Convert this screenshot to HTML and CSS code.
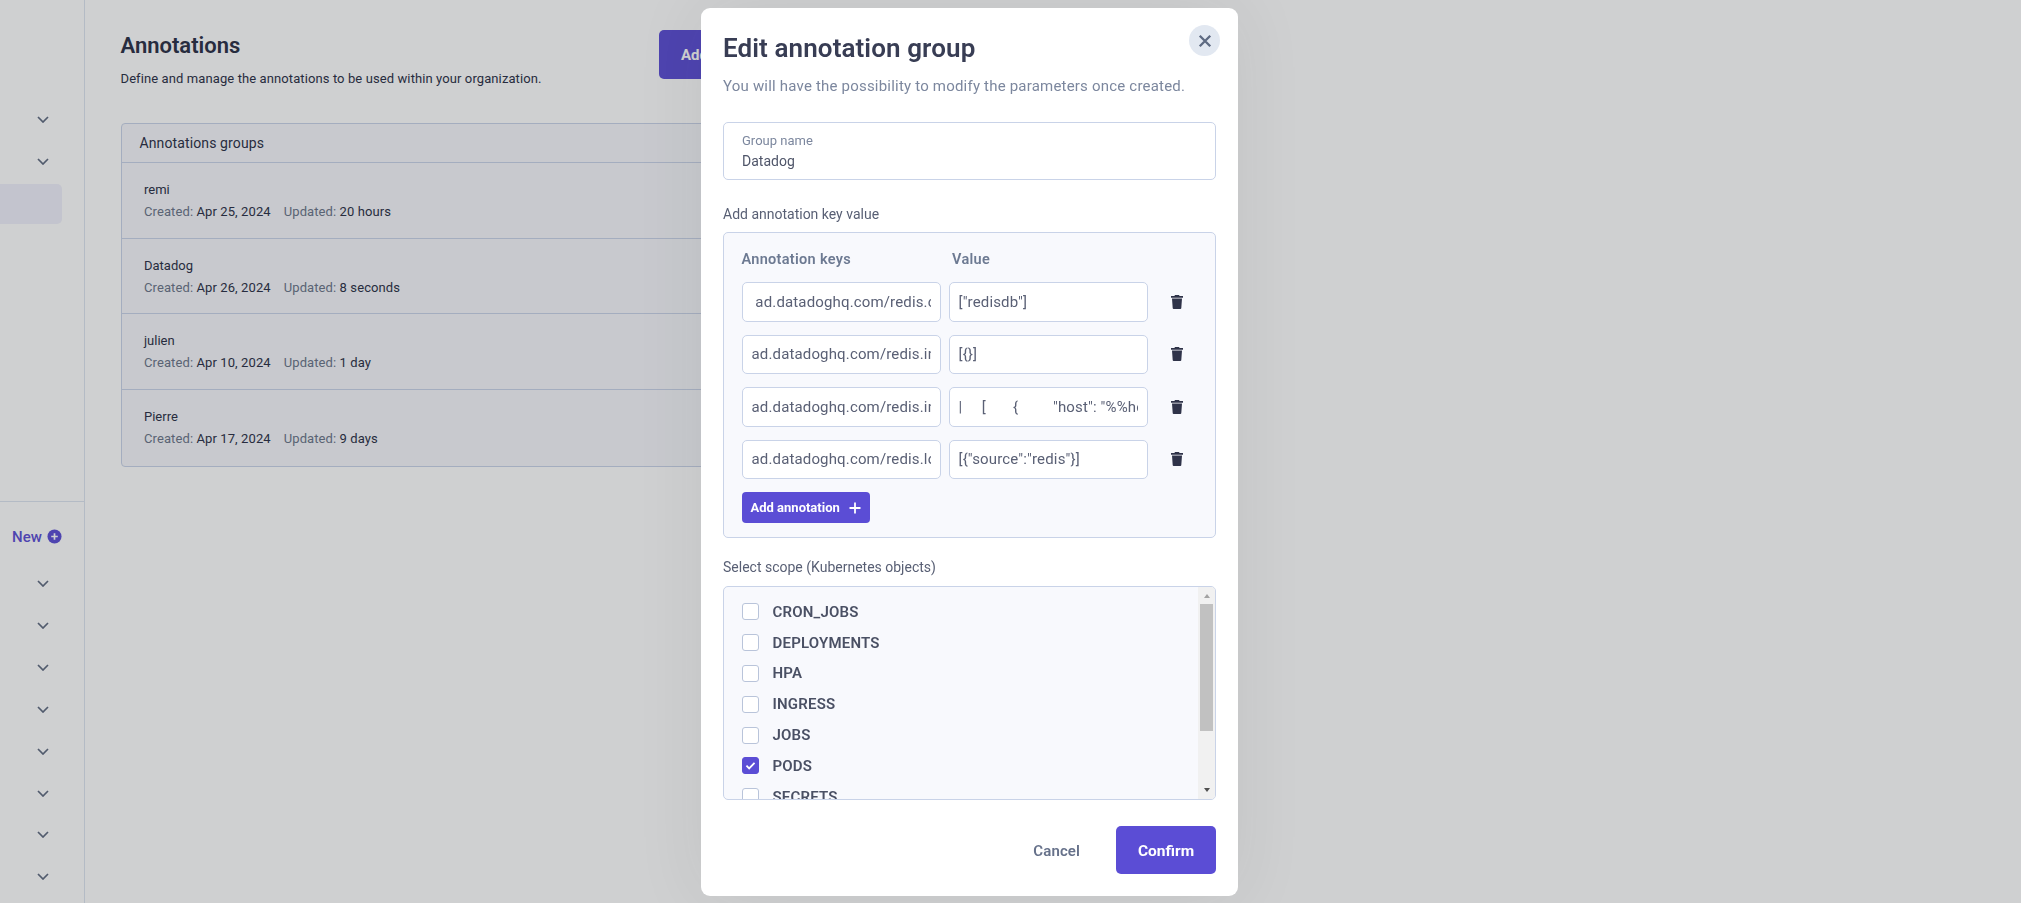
FILE: index.html
```html
<!DOCTYPE html>
<html lang="en">
<head>
    <meta charset="UTF-8">
    <title>Annotations</title>
    <link rel="stylesheet" href="styles.css">
</head>
<body>
    <div class="page">
        <aside class="sidebar">
            <div class="side-top">
                <div class="side-row"><svg class="chev" viewBox="0 0 12 7"><path d="M1 1l5 5 5-5"/></svg></div>
                <div class="side-row"><svg class="chev" viewBox="0 0 12 7"><path d="M1 1l5 5 5-5"/></svg></div>
                <div class="side-active"></div>
            </div>
            <div class="side-new">
                <span>New</span>
                <svg class="new-icon" viewBox="0 0 16 16"><circle cx="8" cy="8" r="7.5"/><path d="M8 4.5v7M4.5 8h7"/></svg>
            </div>
            <div class="side-row"><svg class="chev" viewBox="0 0 12 7"><path d="M1 1l5 5 5-5"/></svg></div>
            <div class="side-row"><svg class="chev" viewBox="0 0 12 7"><path d="M1 1l5 5 5-5"/></svg></div>
            <div class="side-row"><svg class="chev" viewBox="0 0 12 7"><path d="M1 1l5 5 5-5"/></svg></div>
            <div class="side-row"><svg class="chev" viewBox="0 0 12 7"><path d="M1 1l5 5 5-5"/></svg></div>
            <div class="side-row"><svg class="chev" viewBox="0 0 12 7"><path d="M1 1l5 5 5-5"/></svg></div>
            <div class="side-row"><svg class="chev" viewBox="0 0 12 7"><path d="M1 1l5 5 5-5"/></svg></div>
            <div class="side-row"><svg class="chev" viewBox="0 0 12 7"><path d="M1 1l5 5 5-5"/></svg></div>
            <div class="side-row"><svg class="chev" viewBox="0 0 12 7"><path d="M1 1l5 5 5-5"/></svg></div>
        </aside>

        <main class="content">
            <div class="content-head">
                <div>
                    <h1>Annotations</h1>
                    <p>Define and manage the annotations to be used within your organization.</p>
                </div>
                <button class="add-group">Add annotation group</button>
            </div>
            <section class="groups">
                <div class="groups-title">Annotations groups</div>
                <div class="group-row">
                    <div class="group-name">remi</div>
                    <div class="group-meta"><span>Created: <b>Apr 25, 2024</b></span><span>Updated: <b>20 hours</b></span></div>
                </div>
                <div class="group-row">
                    <div class="group-name">Datadog</div>
                    <div class="group-meta"><span>Created: <b>Apr 26, 2024</b></span><span>Updated: <b>8 seconds</b></span></div>
                </div>
                <div class="group-row">
                    <div class="group-name">julien</div>
                    <div class="group-meta"><span>Created: <b>Apr 10, 2024</b></span><span>Updated: <b>1 day</b></span></div>
                </div>
                <div class="group-row">
                    <div class="group-name">Pierre</div>
                    <div class="group-meta"><span>Created: <b>Apr 17, 2024</b></span><span>Updated: <b>9 days</b></span></div>
                </div>
            </section>
        </main>
    </div>

    <div class="overlay">
        <div class="modal">
            <button class="close" aria-label="Close"><svg viewBox="0 0 12 12"><path d="M1.5 1.5l9 9M10.5 1.5l-9 9"/></svg></button>
            <h2>Edit annotation group</h2>
            <p class="modal-sub">You will have the possibility to modify the parameters once created.</p>

            <label class="name-field">
                <span>Group name</span>
                <input type="text" value="Datadog">
            </label>

            <div class="field-label kv-label">Add annotation key value</div>
            <div class="kv-panel">
                <div class="kv-head">
                    <span class="kv-key-head">Annotation keys</span>
                    <span class="kv-val-head">Value</span>
                </div>
                <div class="kv-row">
                    <input class="kv-input" type="text" value=" ad.datadoghq.com/redis.checks">
                    <input class="kv-input" type="text" value='["redisdb"]'>
                    <svg class="trash" viewBox="0 0 12 14"><path d="M4 0h4l.6 1H12v1.7H0V1h3.4zM1 3.6h10l-.7 9.4a1 1 0 0 1-1 1H2.7a1 1 0 0 1-1-1z"/></svg>
                </div>
                <div class="kv-row">
                    <input class="kv-input" type="text" value="ad.datadoghq.com/redis.init_configs">
                    <input class="kv-input" type="text" value="[{}]">
                    <svg class="trash" viewBox="0 0 12 14"><path d="M4 0h4l.6 1H12v1.7H0V1h3.4zM1 3.6h10l-.7 9.4a1 1 0 0 1-1 1H2.7a1 1 0 0 1-1-1z"/></svg>
                </div>
                <div class="kv-row">
                    <input class="kv-input" type="text" value="ad.datadoghq.com/redis.instances">
                    <input class="kv-input" type="text" value='|     [       {         "host": "%%host%%"'>
                    <svg class="trash" viewBox="0 0 12 14"><path d="M4 0h4l.6 1H12v1.7H0V1h3.4zM1 3.6h10l-.7 9.4a1 1 0 0 1-1 1H2.7a1 1 0 0 1-1-1z"/></svg>
                </div>
                <div class="kv-row">
                    <input class="kv-input" type="text" value="ad.datadoghq.com/redis.logs">
                    <input class="kv-input" type="text" value='[{"source":"redis"}]'>
                    <svg class="trash" viewBox="0 0 12 14"><path d="M4 0h4l.6 1H12v1.7H0V1h3.4zM1 3.6h10l-.7 9.4a1 1 0 0 1-1 1H2.7a1 1 0 0 1-1-1z"/></svg>
                </div>
                <button class="add-annotation">Add annotation <svg viewBox="0 0 12 12"><path d="M6 .5v11M.5 6h11"/></svg></button>
            </div>

            <div class="field-label scope-label">Select scope (Kubernetes objects)</div>
            <div class="scope-box">
                <div class="scope-list">
                    <div class="scope-row"><span class="check"></span>CRON_JOBS</div>
                    <div class="scope-row"><span class="check"></span>DEPLOYMENTS</div>
                    <div class="scope-row"><span class="check"></span>HPA</div>
                    <div class="scope-row"><span class="check"></span>INGRESS</div>
                    <div class="scope-row"><span class="check"></span>JOBS</div>
                    <div class="scope-row"><span class="check checked"><svg viewBox="0 0 12 10"><path d="M1.5 5.2l3 3 6-6.2"/></svg></span>PODS</div>
                    <div class="scope-row"><span class="check"></span>SECRETS</div>
                </div>
                <div class="scrollbar">
                    <span class="arrow-up"></span>
                    <span class="thumb"></span>
                    <span class="arrow-down"></span>
                </div>
            </div>

            <div class="modal-foot">
                <button class="cancel">Cancel</button>
                <button class="confirm">Confirm</button>
            </div>
        </div>
    </div>
</body>
</html>
```

FILE: styles.css
```css
* {
    box-sizing: border-box;
}

html,
body {
    height: 100%;
}

body {
    margin: 0;
    overflow: hidden;
    background-color: #fff;
    color: #2a2e45;
    font-family: Roboto, "Open Sans", sans-serif;
    font-size: 14px;
}

button {
    font-family: inherit;
    border: 0;
    cursor: pointer;
}

.page {
    display: flex;
    height: 100%;
}

/* sidebar */
.sidebar {
    width: 85px;
    flex-shrink: 0;
    border-right: 1px solid #dde5f0;
}

.side-top {
    height: 502px;
    padding-top: 98.5px;
    border-bottom: 1px solid #dde5f0;
}

.side-row {
    height: 41.85px;
    display: flex;
    align-items: center;
    justify-content: center;
    padding-left: 1px;
}

.chev {
    width: 12px;
    height: 7px;
    fill: none;
    stroke: #5f6a80;
    stroke-width: 1.7;
}

.side-active {
    width: 62px;
    height: 40px;
    margin-top: 1.5px;
    background-color: #f0f0fb;
    border-radius: 0 5px 5px 0;
}

.side-new {
    height: 61px;
    padding: 8px 0 0 12px;
    display: flex;
    align-items: center;
    gap: 5px;
    color: #5b4dd5;
    font-size: 15px;
    font-weight: 500;
}

.new-icon {
    width: 15px;
    height: 15px;
}

.new-icon circle {
    fill: #5b4dd5;
}

.new-icon path {
    stroke: #fff;
    stroke-width: 1.8;
}

/* main */
.content {
    width: 755px;
    padding: 30px 0 0 35.5px;
}

.content-head {
    display: flex;
    justify-content: space-between;
    height: 93px;
}

.content-head h1 {
    margin: 2px 0 0;
    font-size: 22px;
    line-height: 28px;
    font-weight: 600;
}

.content-head p {
    margin: 10px 0 0;
    font-size: 13px;
    line-height: 18px;
    letter-spacing: 0.1px;
}

.add-group {
    width: 181px;
    height: 49px;
    padding: 0 22px;
    background-color: #5b4dd5;
    color: #fff;
    font-size: 15px;
    font-weight: 700;
    text-align: left;
    white-space: nowrap;
    border-radius: 5px;
}

.groups {
    border: 1px solid #c9d3e8;
    border-radius: 4px;
    background-color: #f6f7fb;
}

.groups-title {
    height: 39px;
    padding-left: 18px;
    line-height: 39px;
    font-size: 14px;
    letter-spacing: 0.12px;
    border-bottom: 1px solid #c9d3e8;
}

.group-row {
    height: 75.7px;
    padding: 18px 0 0 22.5px;
    border-bottom: 1px solid #c9d3e8;
}

.group-row:last-child {
    border-bottom: 0;
}

.group-name {
    font-size: 13px;
    line-height: 18px;
}

.group-meta {
    margin-top: 4px;
    display: flex;
    gap: 13px;
    font-size: 13px;
    line-height: 18px;
    letter-spacing: 0.1px;
    color: #6a7489;
}

.group-meta b {
    font-weight: 400;
    color: #2a2e45;
}

/* modal */
.overlay {
    position: fixed;
    inset: 0;
    padding: 8px 0 0 701px;
    background-color: rgba(32, 35, 42, 0.215);
}

.modal {
    position: relative;
    width: 537px;
    height: 888px;
    padding: 24px 22px 22px;
    background-color: #fff;
    border-radius: 9px;
    box-shadow: 0 0 70px rgba(32, 35, 42, 0.08);
}

.close {
    position: absolute;
    top: 17px;
    right: 18px;
    width: 31px;
    height: 31px;
    padding: 0;
    display: flex;
    align-items: center;
    justify-content: center;
    background-color: #e2e8f1;
    border-radius: 50%;
}

.close svg {
    width: 14px;
    height: 14px;
    fill: none;
    stroke: #5e6a82;
    stroke-width: 2;
}

.modal h2 {
    margin: 0;
    font-size: 26px;
    line-height: 32px;
    font-weight: 600;
    letter-spacing: 0.1px;
    color: #383d54;
}

.modal-sub {
    margin: 12px 0 0;
    font-size: 15px;
    line-height: 20px;
    letter-spacing: 0.2px;
    color: #7c879e;
}

.name-field {
    display: block;
    height: 58px;
    margin-top: 26px;
    padding: 9px 18px 0;
    border: 1px solid #c9d3e8;
    border-radius: 5px;
}

.name-field span {
    display: block;
    font-size: 13px;
    line-height: 18px;
    color: #7c879e;
}

.name-field input {
    display: block;
    width: 100%;
    margin-top: 1px;
    padding: 0;
    border: 0;
    outline: 0;
    font: inherit;
    line-height: 20px;
    color: #4f5569;
}

.field-label {
    font-size: 14px;
    line-height: 20px;
    color: #585f74;
}

.kv-label {
    margin-top: 24px;
}

.kv-panel {
    height: 306px;
    margin-top: 8px;
    padding: 17px 17.5px 0;
    background-color: #f8f9fd;
    border: 1px solid #c9d3e8;
    border-radius: 5px;
}

.kv-head {
    display: flex;
    gap: 8px;
    font-size: 14.5px;
    line-height: 20px;
    font-weight: 600;
    letter-spacing: 0.3px;
    color: #6d7a92;
    margin-bottom: 12px;
}

.kv-key-head {
    width: 199.5px;
}

.kv-val-head {
    padding-left: 3px;
}

.kv-row {
    display: flex;
    align-items: center;
    gap: 8px;
    margin-bottom: 13px;
}

.kv-input {
    width: 199px;
    height: 39.5px;
    padding: 0 9px;
    background-color: #fff;
    border: 1px solid #c9d3e8;
    border-radius: 5px;
    outline: 0;
    font: inherit;
    font-size: 15px;
    letter-spacing: 0.15px;
    color: #5a6075;
}

.trash {
    width: 12px;
    height: 14px;
    margin-left: 15.5px;
    fill: #2f3349;
}

.add-annotation {
    height: 31px;
    width: 128px;
    margin-top: 2px;
    padding: 0 0 0 9px;
    display: flex;
    align-items: center;
    gap: 9px;
    background-color: #5b4dd5;
    color: #fff;
    font-size: 13px;
    font-weight: 700;
    white-space: nowrap;
    border-radius: 4px;
}

.add-annotation svg {
    width: 12px;
    height: 12px;
    fill: none;
    stroke: #fff;
    stroke-width: 1.8;
}

.scope-label {
    margin-top: 19px;
}

.scope-box {
    display: flex;
    height: 214.5px;
    margin-top: 8.5px;
    overflow: hidden;
    background-color: #f8f9fd;
    border: 1px solid #c9d3e8;
    border-radius: 5px;
}

.scope-list {
    flex: 1;
    padding: 10px 0 0 17.5px;
    overflow: hidden;
}

.scope-row {
    height: 30.8px;
    display: flex;
    align-items: center;
    gap: 14px;
    font-size: 15px;
    font-weight: 600;
    letter-spacing: 0.2px;
    color: #4a5064;
}

.check {
    width: 17px;
    height: 17px;
    display: flex;
    align-items: center;
    justify-content: center;
    background-color: #fff;
    border: 1px solid #b9c4da;
    border-radius: 3px;
}

.check.checked {
    background-color: #5b4dd5;
    border-color: #5b4dd5;
}

.check svg {
    width: 11px;
    height: 9px;
    fill: none;
    stroke: #fff;
    stroke-width: 2;
}

.scrollbar {
    width: 17px;
    display: flex;
    flex-direction: column;
    align-items: center;
    background-color: #f1f1f1;
}

.arrow-up,
.arrow-down {
    width: 0;
    height: 0;
    border-left: 3.5px solid transparent;
    border-right: 3.5px solid transparent;
}

.arrow-up {
    margin: 7px 0 6px;
    border-bottom: 4px solid #a3a3a3;
}

.arrow-down {
    margin: auto 0 7px;
    border-top: 4px solid #505050;
}

.thumb {
    width: 13px;
    height: 127px;
    background-color: #c1c1c1;
}

.modal-foot {
    display: flex;
    justify-content: flex-end;
    align-items: center;
    margin-top: 26px;
}

.cancel {
    padding: 2px 0 0;
    margin-right: 36px;
    background: none;
    font-size: 15px;
    font-weight: 600;
    letter-spacing: 0.1px;
    color: #66718a;
}

.confirm {
    width: 100px;
    height: 48px;
    padding-top: 3px;
    background-color: #5b4dd5;
    color: #fff;
    font-size: 15.5px;
    font-weight: 700;
    border-radius: 5px;
}
```
